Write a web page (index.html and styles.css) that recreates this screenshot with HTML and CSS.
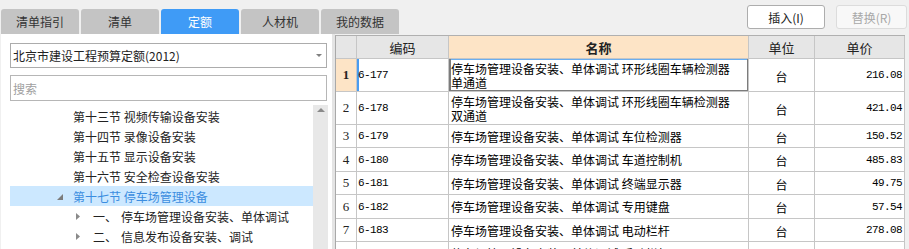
FILE: index.html
```html
<!DOCTYPE html>
<html lang="zh-CN">
<head>
<meta charset="utf-8">
<title>定额</title>
<link rel="stylesheet" href="styles.css">
</head>
<body>
<div class="topbar">
  <div class="tabs">
    <div class="tab">清单指引</div>
    <div class="tab">清单</div>
    <div class="tab active">定额</div>
    <div class="tab">人材机</div>
    <div class="tab">我的数据</div>
  </div>
  <div class="toolbar">
    <button class="btn">插入(I)</button>
    <button class="btn disabled">替换(R)</button>
  </div>
</div>
<div class="main">
  <div class="side">
    <div class="select">
      <span>北京市建设工程预算定额(2012)</span>
      <svg class="caret" width="6" height="3" viewBox="0 0 6 3"><polygon points="0,0 6,0 3,3" fill="#808080"/></svg>
    </div>
    <div class="search">搜索</div>
    <div class="tree">
      <div class="tree-list">
        <div class="node l2"><span class="exp"></span><span>第十三节 视频传输设备安装</span></div>
        <div class="node l2"><span class="exp"></span><span>第十四节 录像设备安装</span></div>
        <div class="node l2"><span class="exp"></span><span>第十五节 显示设备安装</span></div>
        <div class="node l2"><span class="exp"></span><span>第十六节 安全检查设备安装</span></div>
        <div class="node l2 selected"><span class="exp"><svg width="6" height="6" viewBox="0 0 6 6"><polygon points="6,0 6,6 0,6" fill="#7c7c7c"/></svg></span><span>第十七节 停车场管理设备</span></div>
        <div class="node l3"><span class="exp"><svg width="4" height="7" viewBox="0 0 4 7"><polygon points="0,0 4,3.5 0,7" fill="#8a8a8a"/></svg></span><span class="num">一、</span><span>停车场管理设备安装、单体调试</span></div>
        <div class="node l3"><span class="exp"><svg width="4" height="7" viewBox="0 0 4 7"><polygon points="0,0 4,3.5 0,7" fill="#8a8a8a"/></svg></span><span class="num">二、</span><span>信息发布设备安装、调试</span></div>
      </div>
      <div class="vscroll">
        <svg class="up" width="8" height="4" viewBox="0 0 8 4"><polygon points="0,4 8,4 4,0" fill="#8a8a8a"/></svg>
      </div>
    </div>
  </div>
  <div class="splitter"></div>
  <div class="grid">
    <div class="row head">
      <div class="c rn"></div>
      <div class="c hc">编码</div>
      <div class="c hc hname">名称</div>
      <div class="c hc">单位</div>
      <div class="c hc">单价</div>
    </div>
    <div class="row tall current">
      <div class="c rn">1</div>
      <div class="c code">6-177</div>
      <div class="c name">停车场管理设备安装、单体调试 环形线圈车辆检测器单通道</div>
      <div class="c unit">台</div>
      <div class="c price">216.08</div>
    </div>
    <div class="row tall">
      <div class="c rn">2</div>
      <div class="c code">6-178</div>
      <div class="c name">停车场管理设备安装、单体调试 环形线圈车辆检测器双通道</div>
      <div class="c unit">台</div>
      <div class="c price">421.04</div>
    </div>
    <div class="row r23">
      <div class="c rn">3</div>
      <div class="c code">6-179</div>
      <div class="c name">停车场管理设备安装、单体调试 车位检测器</div>
      <div class="c unit">台</div>
      <div class="c price">150.52</div>
    </div>
    <div class="row r24">
      <div class="c rn">4</div>
      <div class="c code">6-180</div>
      <div class="c name">停车场管理设备安装、单体调试 车道控制机</div>
      <div class="c unit">台</div>
      <div class="c price">485.83</div>
    </div>
    <div class="row r23">
      <div class="c rn">5</div>
      <div class="c code">6-181</div>
      <div class="c name">停车场管理设备安装、单体调试 终端显示器</div>
      <div class="c unit">台</div>
      <div class="c price">49.75</div>
    </div>
    <div class="row r24">
      <div class="c rn">6</div>
      <div class="c code">6-182</div>
      <div class="c name">停车场管理设备安装、单体调试 专用键盘</div>
      <div class="c unit">台</div>
      <div class="c price">57.54</div>
    </div>
    <div class="row r23">
      <div class="c rn">7</div>
      <div class="c code">6-183</div>
      <div class="c name">停车场管理设备安装、单体调试 电动栏杆</div>
      <div class="c unit">台</div>
      <div class="c price">278.08</div>
    </div>
    <div class="row r24">
      <div class="c rn">8</div>
      <div class="c code">6-184</div>
      <div class="c name">停车场管理设备安装、单体调试 手动栏杆</div>
      <div class="c unit">台</div>
      <div class="c price">185.44</div>
    </div>
  </div>
</div>
</body>
</html>
```

FILE: styles.css
```css
* { box-sizing: border-box; }

body {
  margin: 0;
  width: 909px;
  height: 249px;
  overflow: hidden;
  background: #f0f0f0;
  font-family: "Noto Sans CJK SC", "Noto Sans", sans-serif;
  font-size: 12px;
  color: #222;
}

.topbar {
  display: flex;
  height: 34px;
}

.tabs {
  display: flex;
  align-items: flex-end;
  gap: 2px;
  padding-left: 1px;
}

.tab {
  width: 78px;
  height: 25px;
  background: #c4c4c4;
  border-radius: 3px 3px 0 0;
  display: flex;
  align-items: center;
  justify-content: center;
  color: #333;
}

.tab.active {
  background: #3f9bf6;
  color: #fff;
}

.toolbar {
  margin-left: auto;
  display: flex;
  align-items: flex-start;
  gap: 11px;
  padding-top: 5px;
  padding-right: 2px;
}

.btn {
  width: 78px;
  height: 24px;
  padding: 0;
  border: 1px solid #adadad;
  border-radius: 3px;
  background: #fff;
  font: 12px "Noto Sans CJK SC", sans-serif;
  color: #222;
}

.btn.disabled {
  width: 71px;
  border-color: #dcdcdc;
  background: #f8f8f8;
  color: #a8a8a8;
}

.main {
  display: flex;
  height: 215px;
}

.side {
  margin-left: 1px;
  width: 331px;
  background: #fff;
  padding: 9px 0 0 9px;
  display: flex;
  flex-direction: column;
}

.select {
  width: 317px;
  height: 25px;
  border: 1px solid #acacac;
  display: flex;
  align-items: center;
  justify-content: space-between;
  padding: 0 4px 0 2px;
  color: #222;
}

.caret { display: block; }

.search {
  margin-top: 7px;
  width: 317px;
  height: 26px;
  border: 1px solid #b6b6b6;
  display: flex;
  align-items: center;
  padding-left: 2px;
  color: #a0a0a0;
}

.tree {
  margin-top: 4px;
  width: 318px;
  flex: 1;
  display: flex;
  overflow: hidden;
}

.tree-list {
  width: 303px;
  padding-top: 1px;
}

.node {
  height: 20px;
  display: flex;
  align-items: center;
  white-space: nowrap;
  color: #222;
}

.node.l2 { padding-left: 46px; }
.node.l3 { padding-left: 66px; }

.exp {
  width: 17px;
  height: 20px;
  display: flex;
  align-items: center;
}

.exp svg { display: block; }

.node.l2 .exp svg { margin-top: 2px; margin-left: 1px; }

.num { margin-right: 4px; }

.node.selected {
  background: #cce8ff;
  color: #3b8de0;
}

.vscroll {
  width: 15px;
  background: #e8e8e8;
  padding: 3px 0 0 4px;
}

.up { display: block; }

.splitter {
  width: 3px;
  background: #e4e4e4;
}

.grid {
  margin-top: 1px;
  width: 570px;
  border-left: 1px solid #a9a9a9;
  border-top: 1px solid #b0b0b0;
  background: #fff;
  align-self: flex-start;
}

.row {
  display: grid;
  grid-template-columns: 21px 92px 300px 66px 90px;
  height: 23px;
}

.row.head { height: 23px; }
.row.tall { height: 33px; }
.row.r23 { height: 23px; }
.row.r24 { height: 24px; }

.c {
  border-right: 1px solid #c6c6c6;
  border-bottom: 1px solid #c6c6c6;
  display: flex;
  align-items: center;
  overflow: hidden;
  color: #000;
}

.hc {
  background: #e6e6e6;
  justify-content: center;
  font-size: 13px;
  color: #222;
}

.row.head .rn { background: #e6e6e6; }

.hc.hname {
  background: #fde4c6;
  font-weight: bold;
}

.rn {
  justify-content: center;
  font-family: "Liberation Serif", serif;
  font-size: 13px;
  color: #222;
}

.current .rn {
  background: #fde4c6;
  font-weight: bold;
}

.code {
  padding-left: 1px;
  font-family: "Liberation Mono", monospace;
  font-size: 11px;
  letter-spacing: -0.6px;
}

.current .code {
  box-shadow: inset 2px 0 #4a9cf0;
}

.name {
  padding: 1px 8px 0 2px;
  line-height: 13.5px;
}

.current .name {
  box-shadow: inset 2px 0 #7c7c7c, inset -1px 0 #7c7c7c, inset 0 -1px #7c7c7c, inset 0 1px #6aaef0;
}

.unit {
  justify-content: center;
  padding-top: 2px;
}

.price {
  justify-content: flex-end;
  padding-right: 2px;
  font-family: "Liberation Mono", monospace;
  font-size: 11px;
  letter-spacing: -0.6px;
}
```
